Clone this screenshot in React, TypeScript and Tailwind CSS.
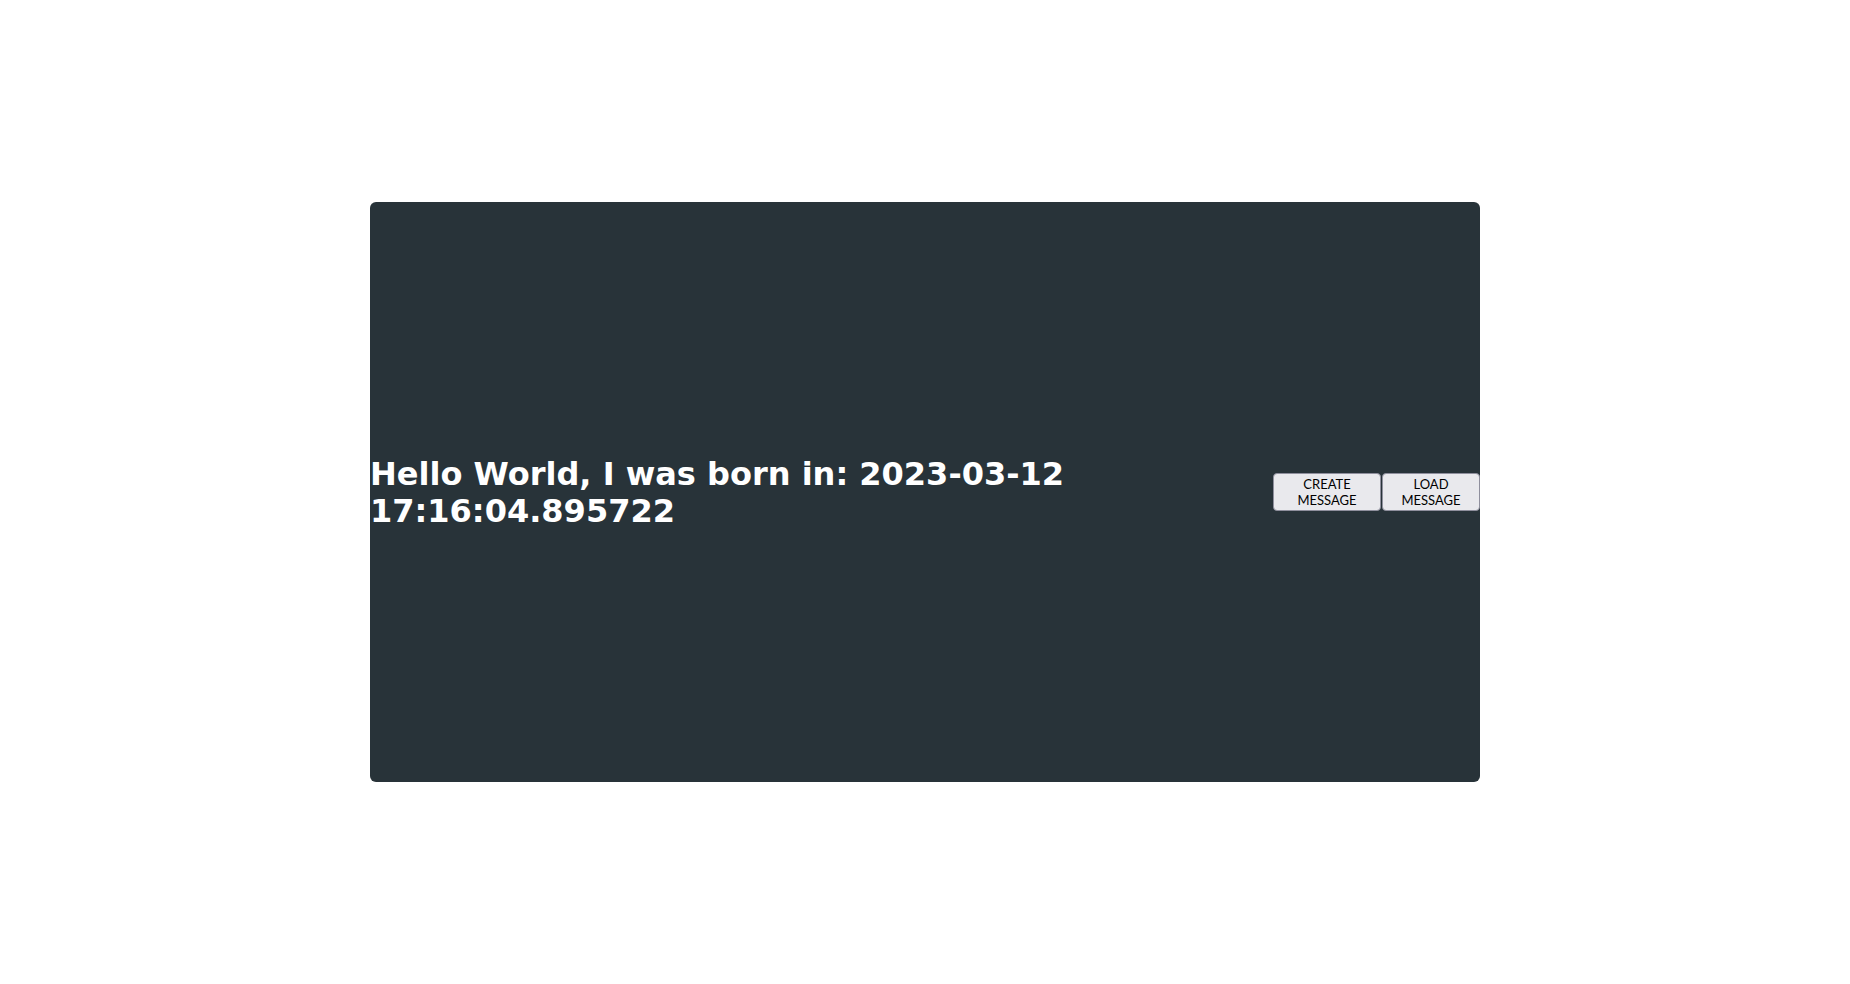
export default function App() {
  return (
    <div className="w-full h-screen flex items-center justify-center bg-white">
      {/* Message panel */}
      <div className="w-[1110px] h-[580px] rounded-[6px] bg-[#283339] flex items-center justify-between">
        <h1 className="pt-[2px] text-white font-bold text-[32px] leading-[1.164] font-['DejaVu_Sans',sans-serif]">
          Hello World, I was born in: 2023-03-12 17:16:04.895722
        </h1>

        <div className="flex items-center gap-[1px] shrink-0">
          <button className="w-[108px] h-[38px] px-2 rounded-[4px] border border-[#8f8f9d] bg-[#e9e9ed] text-black text-[13px] leading-[16px] font-['Lato',sans-serif]">
            CREATE MESSAGE
          </button>
          <button className="w-[98px] h-[38px] px-2 rounded-[4px] border border-[#8f8f9d] bg-[#e9e9ed] text-black text-[13px] leading-[16px] font-['Lato',sans-serif]">
            LOAD MESSAGE
          </button>
        </div>
      </div>
    </div>
  );
}
